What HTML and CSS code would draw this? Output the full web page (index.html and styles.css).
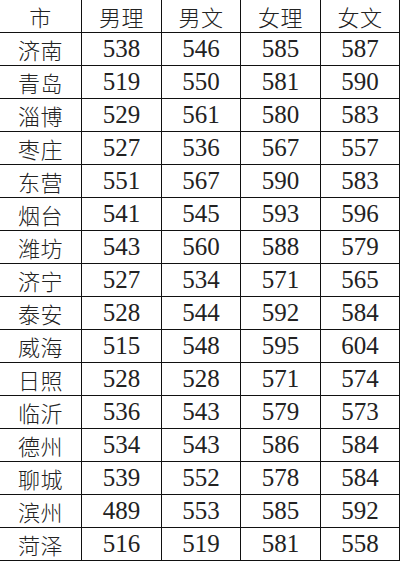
FILE: index.html
```html
<!DOCTYPE html>
<html>
<head>
<meta charset="utf-8">
<link rel="stylesheet" href="styles.css">
</head>
<body>
<div class="frame">
<table class="scores">
<thead>
<tr><th>市</th><th>男理</th><th>男文</th><th>女理</th><th>女文</th></tr>
</thead>
<tbody>
<tr><td class="city">济南</td><td class="num">538</td><td class="num">546</td><td class="num">585</td><td class="num">587</td></tr>
<tr><td class="city">青岛</td><td class="num">519</td><td class="num">550</td><td class="num">581</td><td class="num">590</td></tr>
<tr><td class="city">淄博</td><td class="num">529</td><td class="num">561</td><td class="num">580</td><td class="num">583</td></tr>
<tr><td class="city">枣庄</td><td class="num">527</td><td class="num">536</td><td class="num">567</td><td class="num">557</td></tr>
<tr><td class="city">东营</td><td class="num">551</td><td class="num">567</td><td class="num">590</td><td class="num">583</td></tr>
<tr><td class="city">烟台</td><td class="num">541</td><td class="num">545</td><td class="num">593</td><td class="num">596</td></tr>
<tr><td class="city">潍坊</td><td class="num">543</td><td class="num">560</td><td class="num">588</td><td class="num">579</td></tr>
<tr><td class="city">济宁</td><td class="num">527</td><td class="num">534</td><td class="num">571</td><td class="num">565</td></tr>
<tr><td class="city">泰安</td><td class="num">528</td><td class="num">544</td><td class="num">592</td><td class="num">584</td></tr>
<tr><td class="city">威海</td><td class="num">515</td><td class="num">548</td><td class="num">595</td><td class="num">604</td></tr>
<tr><td class="city">日照</td><td class="num">528</td><td class="num">528</td><td class="num">571</td><td class="num">574</td></tr>
<tr><td class="city">临沂</td><td class="num">536</td><td class="num">543</td><td class="num">579</td><td class="num">573</td></tr>
<tr><td class="city">德州</td><td class="num">534</td><td class="num">543</td><td class="num">586</td><td class="num">584</td></tr>
<tr><td class="city">聊城</td><td class="num">539</td><td class="num">552</td><td class="num">578</td><td class="num">584</td></tr>
<tr><td class="city">滨州</td><td class="num">489</td><td class="num">553</td><td class="num">585</td><td class="num">592</td></tr>
<tr><td class="city">菏泽</td><td class="num">516</td><td class="num">519</td><td class="num">581</td><td class="num">558</td></tr>
</tbody>
</table>
</div>
</body>
</html>
```
FILE: styles.css
```css
html, body {
  margin: 0;
  padding: 0;
  background: #ffffff;
}
.frame {
  width: 401px;
  height: 562px;
  overflow: hidden;
}
.scores {
  border-collapse: collapse;
  table-layout: fixed;
  margin-left: -1px;
  margin-top: -1px;
  width: 401px;
  color: #222222;
}
.scores th,
.scores td {
  border: 1px solid #111;
  height: 32px;
  padding: 0;
  text-align: center;
  vertical-align: middle;
  font-weight: normal;
  line-height: 32px;
}
.scores th:nth-child(1), .scores td:nth-child(1) { width: 81px; }
.scores th:nth-child(2), .scores td:nth-child(2) { width: 79px; }
.scores th:nth-child(3), .scores td:nth-child(3) { width: 78px; }
.scores th:nth-child(4), .scores td:nth-child(4) { width: 79px; }
.scores th:nth-child(5), .scores td:nth-child(5) { width: 78px; }
.scores td.num {
  font-family: "Liberation Serif", serif;
  font-size: 25px;
}
.scores th,
.scores td.city {
  font-family: "Noto Sans CJK SC", sans-serif;
  font-size: 22px;
  font-weight: 300;
  letter-spacing: 0.5px;
}
```
